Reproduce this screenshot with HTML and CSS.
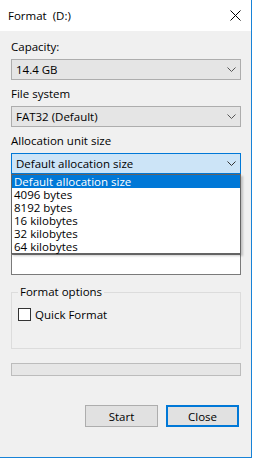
FILE: index.html
```html
<!DOCTYPE html>
<html lang="en">
<head>
  <meta charset="UTF-8" />
  <title>Format (D:)</title>
  <link rel="stylesheet" href="styles.css">
</head>
<body>
  <div class="window">
    <div class="titlebar">
      <span class="title">Format&nbsp; (D:)</span>
      <span class="close">
        <svg width="11" height="11" viewBox="0 0 11 11"><path d="M0.5 0.5 L10.5 10.5 M10.5 0.5 L0.5 10.5" stroke="#000" stroke-width="1" fill="none"/></svg>
      </span>
    </div>

    <div class="content">
      <div class="label first">Capacity:</div>
      <div class="combo">
        <span>14.4 GB</span>
        <svg class="chev" width="9" height="5" viewBox="0 0 9 5"><path d="M0.5 0.5 L4.5 4.5 L8.5 0.5" stroke="#555" fill="none"/></svg>
      </div>

      <div class="label">File system</div>
      <div class="combo">
        <span>FAT32 (Default)</span>
        <svg class="chev" width="9" height="5" viewBox="0 0 9 5"><path d="M0.5 0.5 L4.5 4.5 L8.5 0.5" stroke="#555" fill="none"/></svg>
      </div>

      <div class="label">Allocation unit size</div>
      <div class="combo focused">
        <span>Default allocation size</span>
        <svg class="chev" width="9" height="5" viewBox="0 0 9 5"><path d="M0.5 0.5 L4.5 4.5 L8.5 0.5" stroke="#333" fill="none"/></svg>
      </div>

      <div class="textbox"></div>

      <fieldset class="group">
        <legend>Format options</legend>
        <label class="check"><span class="box"></span>Quick Format</label>
      </fieldset>

      <div class="progress"></div>

      <div class="buttons">
        <button class="btn">Start</button>
        <button class="btn default">Close</button>
      </div>
    </div>

    <ul class="dropdown">
      <li class="selected">Default allocation size</li>
      <li>4096 bytes</li>
      <li>8192 bytes</li>
      <li>16 kilobytes</li>
      <li>32 kilobytes</li>
      <li>64 kilobytes</li>
    </ul>
  </div>
</body>
</html>
```

FILE: styles.css
```css
body {
  margin: 0;
  background: #fff;
  font-family: "Segoe UI", "Open Sans", "Noto Sans", sans-serif;
  font-size: 11.5px;
  color: #000;
}

.window {
  position: relative;
  width: 251px;
  height: 457px;
  background: #f0f0f0;
  border-right: 1px solid #1883d7;
  border-bottom: 1px solid #1883d7;
}

.titlebar {
  height: 31px;
  background: #fff;
  display: flex;
  align-items: center;
  justify-content: space-between;
  padding-left: 8px;
  padding-right: 10px;
}

.title {
  font-size: 11.5px;
}

.close svg {
  display: block;
}

.content {
  padding: 0 10px 0 11px;
}

.label {
  height: 16px;
  line-height: 16px;
  margin-top: 6px;
  margin-bottom: 4px;
}

.label.first {
  margin-top: 8px;
}

.combo {
  height: 19px;
  border: 1px solid #adadad;
  background: #e5e5e5;
  display: flex;
  align-items: center;
  justify-content: space-between;
  padding: 0 4px 0 4px;
}

.combo.focused {
  border-color: #0078d7;
  background: #cce4f7;
}

.chev {
  display: block;
}

.textbox {
  height: 19px;
  margin-top: 80px;
  border: 1px solid #7a7a7a;
  background: #fff;
}

.group {
  margin: 10px 0 0 0;
  padding: 0 6px 0 6px;
  height: 62px;
  border: 1px solid #dcdcdc;
}

.group legend {
  padding: 0 2px;
  margin-left: 0;
  line-height: 14px;
}

.check {
  display: flex;
  align-items: center;
  margin-top: 8px;
}

.box {
  width: 11px;
  height: 11px;
  border: 1px solid #333;
  background: #fff;
  margin-right: 4px;
}

.progress {
  margin-top: 14px;
  height: 11px;
  border: 1px solid #bcbcbc;
  background: #e6e6e6;
}

.buttons {
  display: flex;
  justify-content: flex-end;
  gap: 8px;
  margin-top: 29px;
  padding-right: 2px;
}

.btn {
  width: 73px;
  height: 22px;
  border: 1px solid #adadad;
  background: #e1e1e1;
  font-family: inherit;
  font-size: 11.5px;
  padding: 0;
  color: #000;
}

.btn.default {
  border: 2px solid #0078d7;
}

.dropdown {
  position: absolute;
  top: 174px;
  left: 11px;
  width: 228px;
  margin: 0;
  padding: 0;
  list-style: none;
  background: #fff;
  border: 1px solid #646464;
  box-shadow: 2px 2px 2px rgba(0, 0, 0, 0.2);
}

.dropdown li {
  height: 13px;
  line-height: 13px;
  padding-left: 2px;
}

.dropdown li.selected {
  background: #0078d7;
  color: #fff;
}
```
